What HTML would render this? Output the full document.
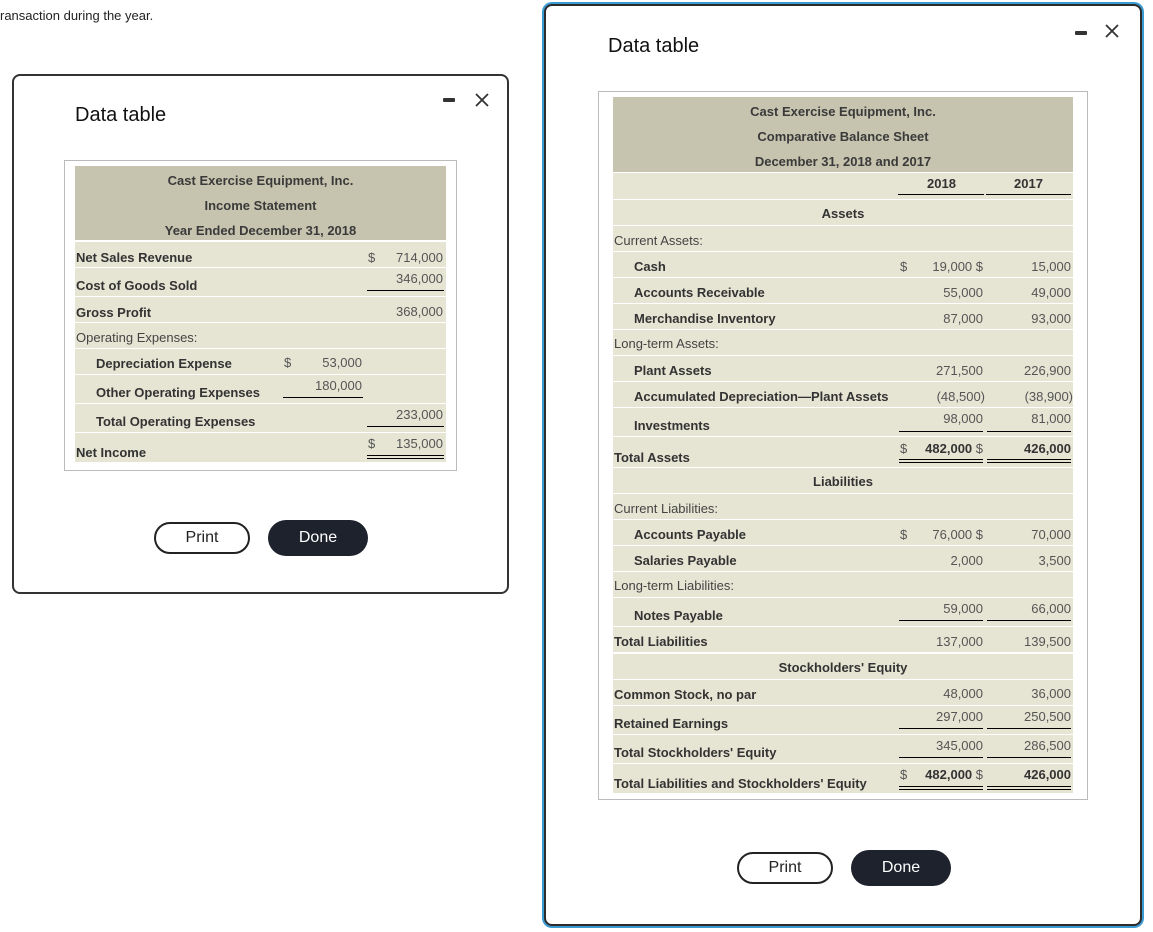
<!DOCTYPE html>
<html><head><meta charset="utf-8"><style>
*{box-sizing:border-box;margin:0;padding:0}
body{width:1153px;height:932px;background:#fff;font-family:"Liberation Sans",Arial,sans-serif;position:relative;overflow:hidden;color:#333}
.abs{position:absolute}
.dlg{position:absolute;background:#fff;border:2px solid #333;border-radius:8px}
.ttl{position:absolute;font-size:20px;color:#111}
.min{position:absolute;width:12px;height:4px;background:#333;border-radius:1px}
.tbox{position:absolute;border:1px solid #bbb;background:#fff}
.hd{position:absolute;background:#c6c3ae}
.hd div{position:absolute;left:0;right:0;text-align:center;font-size:13px;font-weight:bold;color:#3a3a3a}
.r{position:absolute;background:#e6e4d3}
.r span{position:absolute;font-size:13px;white-space:nowrap}
.lb{font-weight:bold;color:#333}
.lr{color:#444}
.n{color:#555}
.u{position:absolute;height:1px;background:#000}
.btn{position:absolute;border-radius:18px;font-size:16px;text-align:center}
</style></head><body>
<div class="abs" style="left:0;top:8px;font-size:13px;color:#222">ransaction during the year.</div>

<!-- Left dialog -->
<div class="dlg" style="left:12px;top:74px;width:497px;height:520px"></div>
<div class="ttl" style="left:75px;top:104px">Data table</div>
<div class="min" style="left:443px;top:98px"></div>
<svg class="abs" style="left:474px;top:92px" width="16" height="16"><path d="M2 2L14 14M14 2L2 14" stroke="#333" stroke-width="1.8"/></svg>
<div class="tbox" style="left:64px;top:160px;width:393px;height:311px"></div>
<div class="hd" style="left:75px;top:166px;width:371px;height:74px">
<div style="top:7px">Cast Exercise Equipment, Inc.</div>
<div style="top:32px">Income Statement</div>
<div style="top:57px">Year Ended December 31, 2018</div>
</div>
<div class="r" style="left:75px;top:242px;width:371px;height:25px;line-height:31px"><span class="lb" style="left:1px">Net Sales Revenue</span><span class="n" style="left:293px">$</span><span class="n" style="right:3px">714,000</span></div>
<div class="r" style="left:75px;top:268px;width:371px;height:28px"><span class="lb" style="left:1px;top:10px">Cost of Goods Sold</span><span class="n" style="right:3px;top:3px">346,000</span><div class="u" style="left:292px;width:77px;top:22px"></div></div>
<div class="r" style="left:75px;top:297px;width:371px;height:25px;line-height:31px"><span class="lb" style="left:1px">Gross Profit</span><span class="n" style="right:3px;top:-1px">368,000</span></div>
<div class="r" style="left:75px;top:323px;width:371px;height:25px;line-height:29px"><span class="lr" style="left:1px">Operating Expenses:</span></div>
<div class="r" style="left:75px;top:349px;width:371px;height:25px;line-height:30px"><span class="lb" style="left:21px">Depreciation Expense</span><span class="n" style="left:209px;top:-1px">$</span><span class="n" style="right:84px;top:-1px">53,000</span></div>
<div class="r" style="left:75px;top:375px;width:371px;height:28px"><span class="lb" style="left:21px;top:10px">Other Operating Expenses</span><span class="n" style="right:84px;top:3px">180,000</span><div class="u" style="left:208px;width:80px;top:22px"></div></div>
<div class="r" style="left:75px;top:404px;width:371px;height:28px"><span class="lb" style="left:21px;top:10px">Total Operating Expenses</span><span class="n" style="right:3px;top:3px">233,000</span><div class="u" style="left:292px;width:77px;top:22px"></div></div>
<div class="r" style="left:75px;top:433px;width:371px;height:29px"><span class="lb" style="left:1px;top:12px">Net Income</span><span class="n" style="left:293px;top:3px">$</span><span class="n" style="right:3px;top:3px">135,000</span><div class="u" style="left:292px;width:77px;top:22px"></div><div class="u" style="left:292px;width:77px;top:25px"></div></div>
<div class="btn" style="left:154px;top:522px;width:96px;height:32px;border:2px solid #222;line-height:28px;color:#222">Print</div>
<div class="btn" style="left:268px;top:520px;width:100px;height:36px;background:#1e222c;color:#fff;line-height:36px">Done</div>

<!-- Right dialog -->
<div class="dlg" style="left:544px;top:4px;width:598px;height:922px;border-color:#2c2c2c;box-shadow:0 0 0 2px #3a9bd1"></div>
<div class="ttl" style="left:608px;top:35px">Data table</div>
<div class="min" style="left:1075px;top:31px"></div>
<svg class="abs" style="left:1104px;top:23px" width="16" height="16"><path d="M2 2L14 14M14 2L2 14" stroke="#333" stroke-width="1.8"/></svg>
<div class="tbox" style="left:598px;top:91px;width:490px;height:709px"></div>
<div class="hd" style="left:613px;top:97px;width:460px;height:75px">
<div style="top:7px">Cast Exercise Equipment, Inc.</div>
<div style="top:32px">Comparative Balance Sheet</div>
<div style="top:57px">December 31, 2018 and 2017</div>
</div>
<div class="r" style="left:613px;top:173px;width:460px;height:26px"><span class="lb" style="left:314px;top:3px">2018</span><span class="lb" style="left:401px;top:3px">2017</span><div class="u" style="left:285px;width:86px;top:21px"></div><div class="u" style="left:373px;width:85px;top:21px"></div></div>
<div class="r" style="left:613px;top:200px;width:460px;height:25px;line-height:28px"><span class="lb" style="left:0;right:0;text-align:center">Assets</span></div>
<div class="r" style="left:613px;top:226px;width:460px;height:25px;line-height:30px"><span class="lr" style="left:1px">Current Assets:</span></div>
<div class="r" style="left:613px;top:252px;width:460px;height:25px;line-height:30px"><span class="lb" style="left:21px">Cash</span><span class="n" style="left:287px">$</span><span class="n" style="right:90px">19,000 $</span><span class="n" style="right:2px">15,000</span></div>
<div class="r" style="left:613px;top:278px;width:460px;height:25px;line-height:30px"><span class="lb" style="left:21px">Accounts Receivable</span><span class="n" style="right:90px">55,000</span><span class="n" style="right:2px">49,000</span></div>
<div class="r" style="left:613px;top:304px;width:460px;height:25px;line-height:30px"><span class="lb" style="left:21px">Merchandise Inventory</span><span class="n" style="right:90px">87,000</span><span class="n" style="right:2px">93,000</span></div>
<div class="r" style="left:613px;top:330px;width:460px;height:25px;line-height:28px"><span class="lr" style="left:1px">Long-term Assets:</span></div>
<div class="r" style="left:613px;top:356px;width:460px;height:25px;line-height:30px"><span class="lb" style="left:21px">Plant Assets</span><span class="n" style="right:90px">271,500</span><span class="n" style="right:2px">226,900</span></div>
<div class="r" style="left:613px;top:382px;width:460px;height:25px;line-height:30px"><span class="lb" style="left:21px">Accumulated Depreciation—Plant Assets</span><span class="n" style="right:88px">(48,500)</span><span class="n" style="right:0">(38,900)</span></div>
<div class="r" style="left:613px;top:408px;width:460px;height:28px"><span class="lb" style="left:21px;top:10px">Investments</span><span class="n" style="right:90px;top:3px">98,000</span><span class="n" style="right:2px;top:3px">81,000</span><div class="u" style="left:286px;width:84px;top:23px"></div><div class="u" style="left:374px;width:84px;top:23px"></div></div>
<div class="r" style="left:613px;top:437px;width:460px;height:30px"><span class="lb" style="left:1px;top:13px">Total Assets</span><span class="n" style="left:287px;top:4px">$</span><span class="lb" style="right:90px;top:4px">482,000 <span style="position:static;font-weight:normal;color:#555">$</span></span><span class="lb" style="right:2px;top:4px">426,000</span><div class="u" style="left:286px;width:84px;top:22px"></div><div class="u" style="left:286px;width:84px;top:25px"></div><div class="u" style="left:374px;width:84px;top:22px"></div><div class="u" style="left:374px;width:84px;top:25px"></div></div>
<div class="r" style="left:613px;top:468px;width:460px;height:25px;line-height:28px"><span class="lb" style="left:0;right:0;text-align:center">Liabilities</span></div>
<div class="r" style="left:613px;top:494px;width:460px;height:25px;line-height:30px"><span class="lr" style="left:1px">Current Liabilities:</span></div>
<div class="r" style="left:613px;top:520px;width:460px;height:25px;line-height:30px"><span class="lb" style="left:21px">Accounts Payable</span><span class="n" style="left:287px">$</span><span class="n" style="right:90px">76,000 $</span><span class="n" style="right:2px">70,000</span></div>
<div class="r" style="left:613px;top:546px;width:460px;height:25px;line-height:30px"><span class="lb" style="left:21px">Salaries Payable</span><span class="n" style="right:90px">2,000</span><span class="n" style="right:2px">3,500</span></div>
<div class="r" style="left:613px;top:572px;width:460px;height:25px;line-height:28px"><span class="lr" style="left:1px">Long-term Liabilities:</span></div>
<div class="r" style="left:613px;top:598px;width:460px;height:28px"><span class="lb" style="left:21px;top:10px">Notes Payable</span><span class="n" style="right:90px;top:3px">59,000</span><span class="n" style="right:2px;top:3px">66,000</span><div class="u" style="left:286px;width:84px;top:22px"></div><div class="u" style="left:374px;width:84px;top:22px"></div></div>
<div class="r" style="left:613px;top:627px;width:460px;height:25px;line-height:30px"><span class="lb" style="left:1px">Total Liabilities</span><span class="n" style="right:90px">137,000</span><span class="n" style="right:2px">139,500</span></div>
<div class="r" style="left:613px;top:654px;width:460px;height:25px;line-height:28px"><span class="lb" style="left:0;right:0;text-align:center">Stockholders' Equity</span></div>
<div class="r" style="left:613px;top:680px;width:460px;height:25px;line-height:30px"><span class="lb" style="left:1px">Common Stock, no par</span><span class="n" style="right:90px;top:-1px">48,000</span><span class="n" style="right:2px;top:-1px">36,000</span></div>
<div class="r" style="left:613px;top:706px;width:460px;height:28px"><span class="lb" style="left:1px;top:10px">Retained Earnings</span><span class="n" style="right:90px;top:3px">297,000</span><span class="n" style="right:2px;top:3px">250,500</span><div class="u" style="left:286px;width:84px;top:22px"></div><div class="u" style="left:374px;width:84px;top:22px"></div></div>
<div class="r" style="left:613px;top:735px;width:460px;height:28px"><span class="lb" style="left:1px;top:10px">Total Stockholders' Equity</span><span class="n" style="right:90px;top:3px">345,000</span><span class="n" style="right:2px;top:3px">286,500</span><div class="u" style="left:286px;width:84px;top:22px"></div><div class="u" style="left:374px;width:84px;top:22px"></div></div>
<div class="r" style="left:613px;top:764px;width:460px;height:29px"><span class="lb" style="left:1px;top:12px">Total Liabilities and Stockholders' Equity</span><span class="n" style="left:287px;top:3px">$</span><span class="lb" style="right:90px;top:3px">482,000 <span style="position:static;font-weight:normal;color:#555">$</span></span><span class="lb" style="right:2px;top:3px">426,000</span><div class="u" style="left:286px;width:84px;top:22px"></div><div class="u" style="left:286px;width:84px;top:25px"></div><div class="u" style="left:374px;width:84px;top:22px"></div><div class="u" style="left:374px;width:84px;top:25px"></div></div>
<div class="btn" style="left:737px;top:852px;width:96px;height:32px;border:2px solid #222;line-height:28px;color:#222">Print</div>
<div class="btn" style="left:851px;top:850px;width:100px;height:36px;background:#1e222c;color:#fff;line-height:36px">Done</div>
</body></html>
